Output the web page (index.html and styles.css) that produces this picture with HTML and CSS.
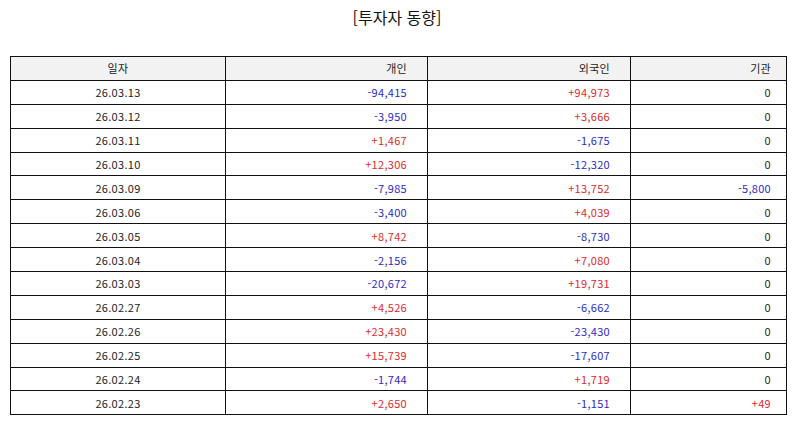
FILE: index.html
```html
<!DOCTYPE html>
<html lang="ko">
<head>
<meta charset="utf-8">
<link rel="stylesheet" href="styles.css">
</head>
<body>
<h1 class="title">[투자자 동향]</h1>
<table class="grid">
<colgroup><col class="c1"><col class="c2"><col class="c3"><col class="c4"></colgroup>
<thead>
<tr><th class="date">일자</th><th>개인</th><th>외국인</th><th class="last">기관</th></tr>
</thead>
<tbody>
<tr><td class="date">26.03.13</td><td class="dn">-94,415</td><td class="up">+94,973</td><td class="last">0</td></tr>
<tr><td class="date">26.03.12</td><td class="dn">-3,950</td><td class="up">+3,666</td><td class="last">0</td></tr>
<tr><td class="date">26.03.11</td><td class="up">+1,467</td><td class="dn">-1,675</td><td class="last">0</td></tr>
<tr><td class="date">26.03.10</td><td class="up">+12,306</td><td class="dn">-12,320</td><td class="last">0</td></tr>
<tr><td class="date">26.03.09</td><td class="dn">-7,985</td><td class="up">+13,752</td><td class="last dn">-5,800</td></tr>
<tr><td class="date">26.03.06</td><td class="dn">-3,400</td><td class="up">+4,039</td><td class="last">0</td></tr>
<tr><td class="date">26.03.05</td><td class="up">+8,742</td><td class="dn">-8,730</td><td class="last">0</td></tr>
<tr><td class="date">26.03.04</td><td class="dn">-2,156</td><td class="up">+7,080</td><td class="last">0</td></tr>
<tr><td class="date">26.03.03</td><td class="dn">-20,672</td><td class="up">+19,731</td><td class="last">0</td></tr>
<tr><td class="date">26.02.27</td><td class="up">+4,526</td><td class="dn">-6,662</td><td class="last">0</td></tr>
<tr><td class="date">26.02.26</td><td class="up">+23,430</td><td class="dn">-23,430</td><td class="last">0</td></tr>
<tr><td class="date">26.02.25</td><td class="up">+15,739</td><td class="dn">-17,607</td><td class="last">0</td></tr>
<tr><td class="date">26.02.24</td><td class="dn">-1,744</td><td class="up">+1,719</td><td class="last">0</td></tr>
<tr><td class="date">26.02.23</td><td class="up">+2,650</td><td class="dn">-1,151</td><td class="last up">+49</td></tr>
</tbody>
</table>
</body>
</html>
```
FILE: styles.css
```css
html, body {
  margin: 0;
  padding: 0;
  background: #fff;
}
body {
  font-family: "Noto Sans CJK KR", "Noto Sans", sans-serif;
  color: #222;
}
.title {
  margin: 0;
  padding-top: 5px;
  height: 56px;
  box-sizing: border-box;
  text-align: center;
  font-size: 16px;
  font-weight: normal;
  line-height: 24px;
  color: #111;
}
.grid {
  margin-left: 10px;
  width: 776px;
  border-collapse: collapse;
  table-layout: fixed;
  font-size: 11px;
  letter-spacing: 0.3px;
}
.c1 { width: 215px; }
.c2 { width: 202px; }
.c3 { width: 203px; }
.c4 { width: 156px; }
.grid th, .grid td {
  border: 1px solid #111;
  height: 22.9px;
  padding: 0 20px 0 0;
  text-align: right;
  line-height: 14px;
  font-weight: normal;
}
.grid th {
  background: #f2f2f2;
  color: #222;
}
.grid .date {
  text-align: center;
  padding: 0;
}
.grid .last {
  padding-right: 15px;
}
.up { color: #e02a2a; }
.dn { color: #2b2bc8; }
```
